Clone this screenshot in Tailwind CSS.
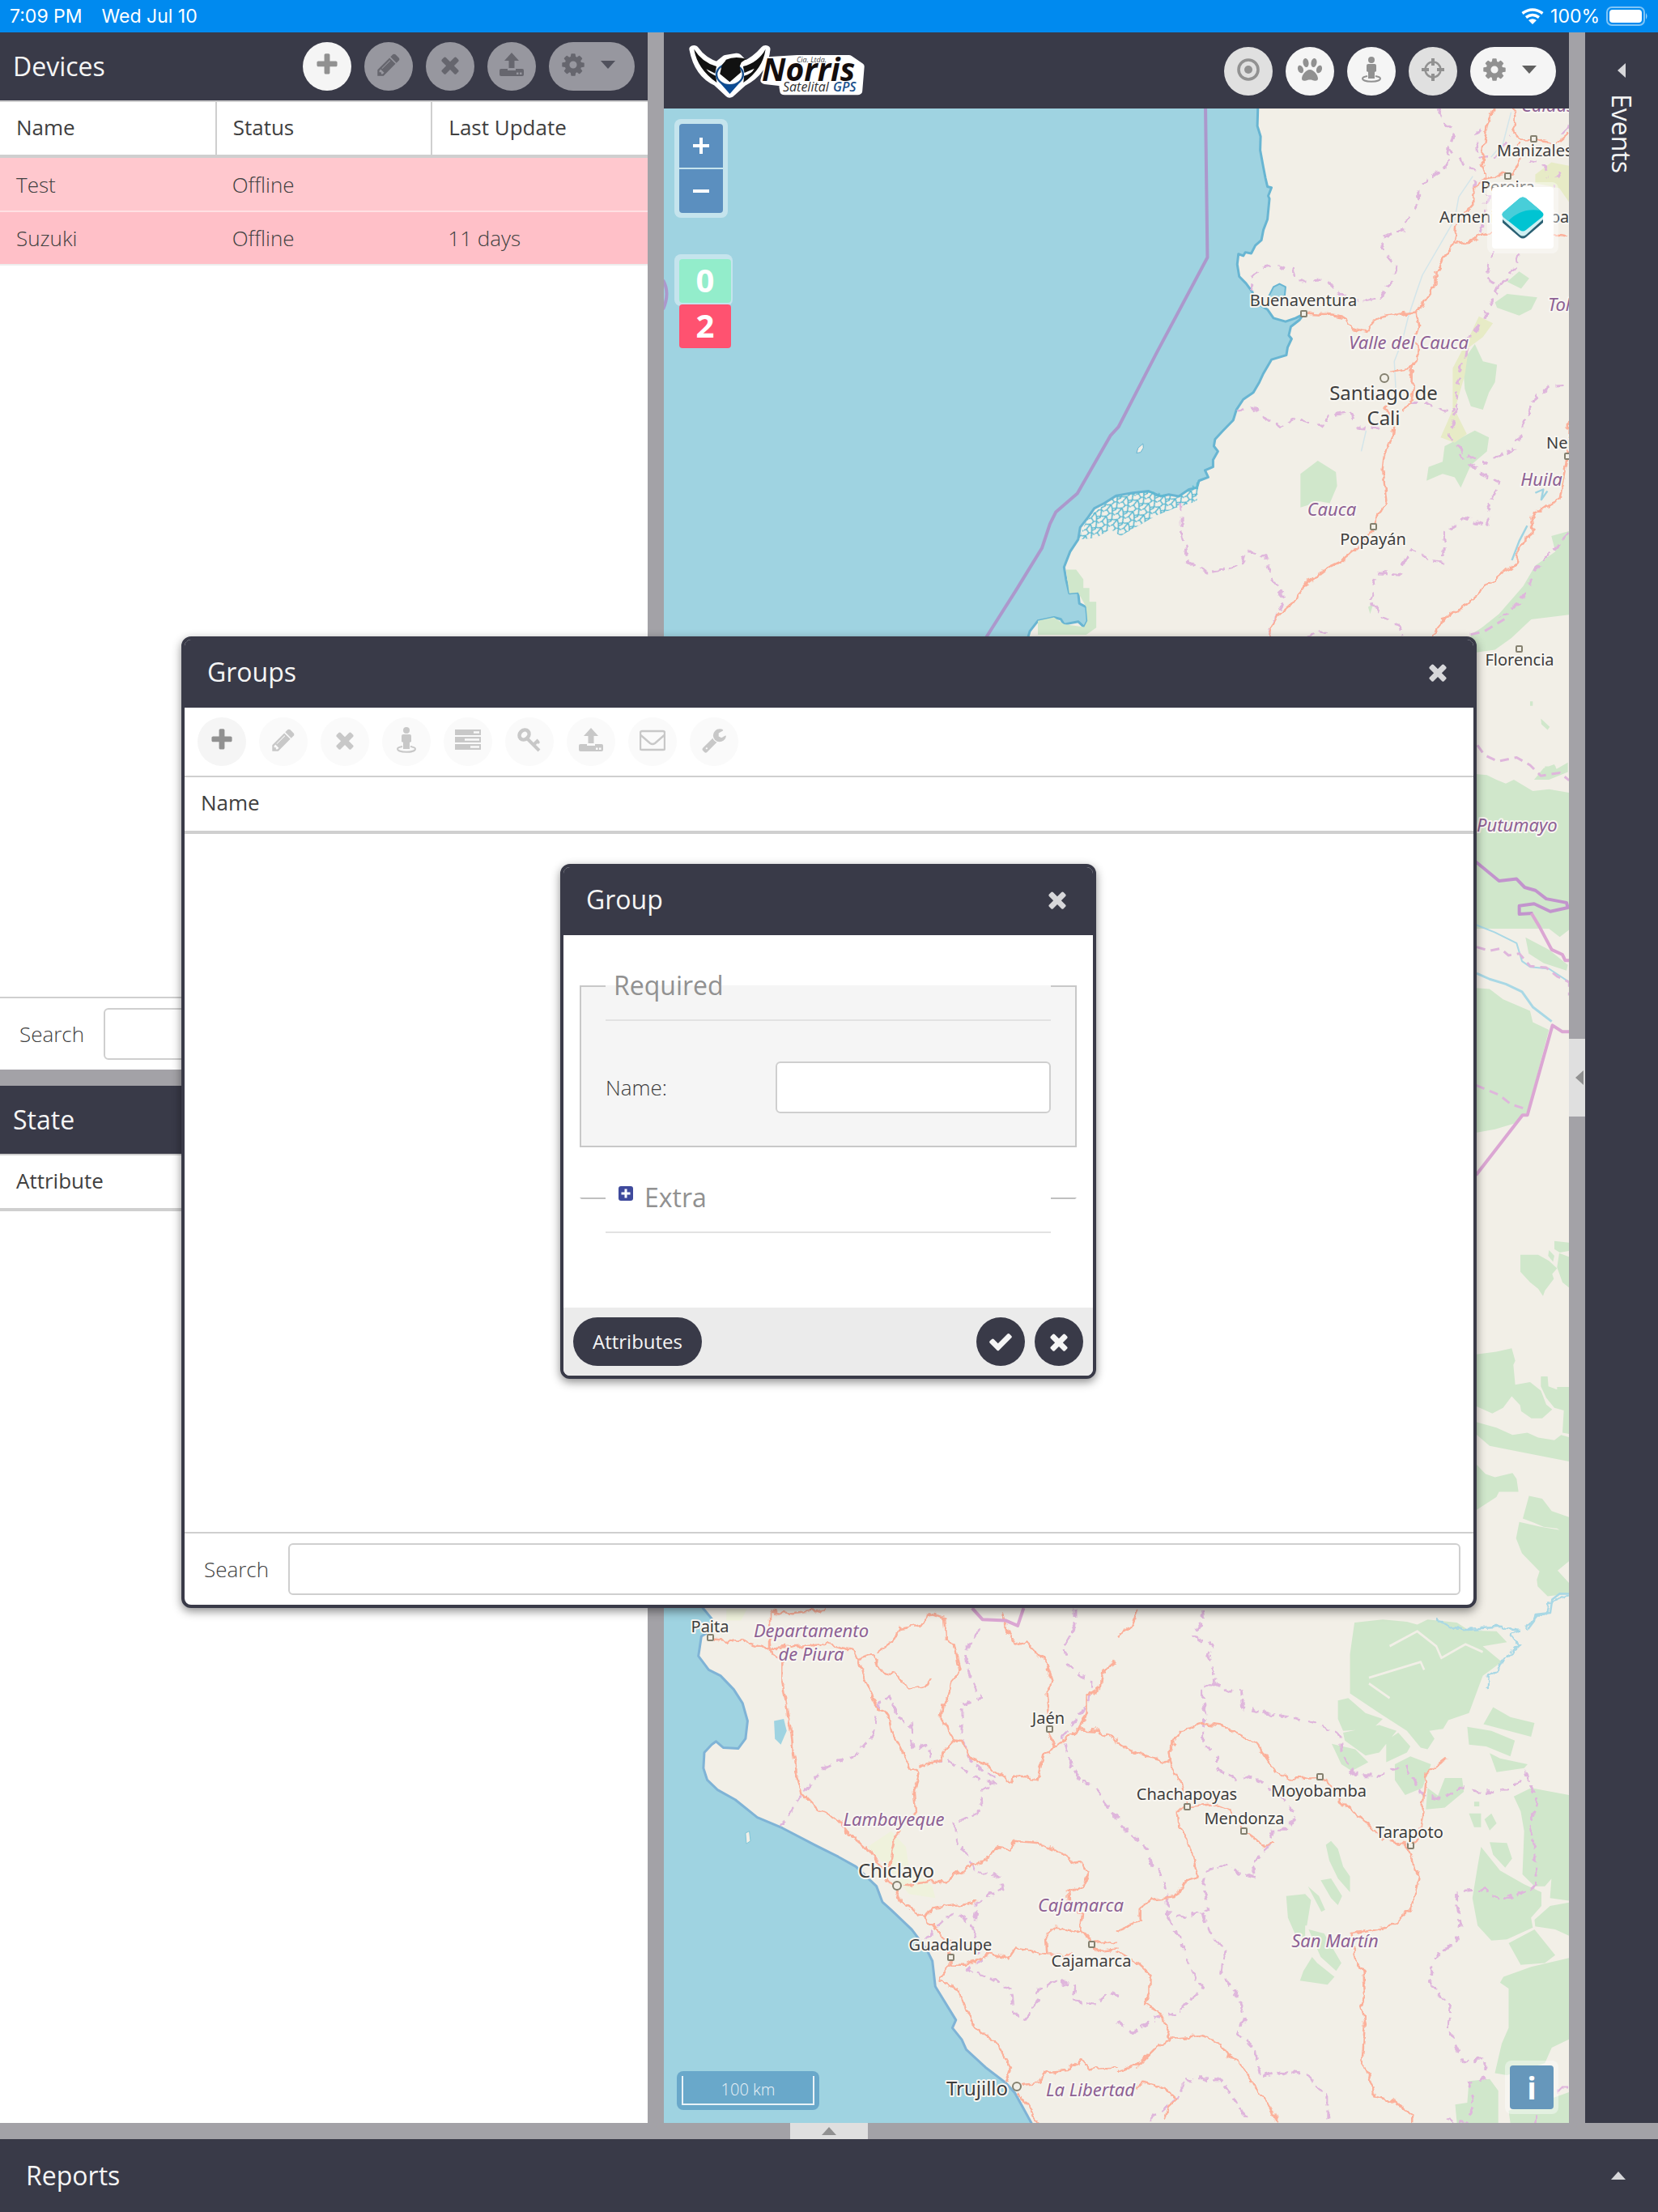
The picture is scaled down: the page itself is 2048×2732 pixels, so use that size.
<!DOCTYPE html>
<html lang="en">
<head>
<meta charset="utf-8">
<meta name="viewport" content="width=device-width, initial-scale=1">
<title>Norris Satelital GPS</title>
<script src="https://cdn.jsdelivr.net/npm/@tailwindcss/browser@4"></script>
</head>
<body class="bg-white font-['Open_Sans',sans-serif] text-[26px] leading-9 text-[#404040]">

<svg class="hidden" aria-hidden="true">
  <symbol id="plus" viewBox="0 0 1792 1792"><path d="M1600 736v192q0 40-28 68t-68 28h-416v416q0 40-28 68t-68 28h-192q-40 0-68-28t-28-68v-416h-416q-40 0-68-28t-28-68v-192q0-40 28-68t68-28h416v-416q0-40 28-68t68-28h192q40 0 68 28t28 68v416h416q40 0 68 28t28 68z"/></symbol>
  <symbol id="times" viewBox="0 0 1792 1792"><path d="M1490 1322q0 40-28 68l-136 136q-28 28-68 28t-68-28l-294-294-294 294q-28 28-68 28t-68-28l-136-136q-28-28-28-68t28-68l294-294-294-294q-28-28-28-68t28-68l136-136q28-28 68-28t68 28l294 294 294-294q28-28 68-28t68 28l136 136q28 28 28 68t-28 68l-294 294 294 294q28 28 28 68z"/></symbol>
  <symbol id="pencil" viewBox="0 0 1792 1792"><path d="M491 1536l91-91-235-235-91 91v107h128v128h107zm523-928q0-22-22-22-10 0-17 7l-542 542q-7 7-7 17 0 22 22 22 10 0 17-7l542-542q7-7 7-17zm-54-192l416 416-832 832h-416v-416zm683 96q0 53-37 90l-166 166-416-416 166-165q36-38 90-38 53 0 91 38l235 234q37 39 37 91z"/></symbol>
  <symbol id="cog" viewBox="0 0 1792 1792"><path d="M1152 896q0-106-75-181t-181-75-181 75-75 181 75 181 181 75 181-75 75-181zm512-109v222q0 12-8 23t-20 13l-185 28q-19 54-39 91 35 50 107 138 10 12 10 25t-9 23q-27 37-99 108t-94 71q-12 0-26-9l-138-108q-44 23-91 38-16 136-29 186-7 28-36 28h-222q-14 0-24.500-8.500t-11.500-21.500l-28-184q-49-16-90-37l-141 107q-10 9-25 9-14 0-25-11-126-114-165-168-7-10-7-23 0-12 8-23 15-21 51-66.500t54-70.500q-27-50-41-99l-183-27q-13-2-21-12.500t-8-23.500v-222q0-12 8-23t19-13l186-28q14-46 39-92-40-57-107-138-10-12-10-24 0-10 9-23 26-36 98.500-107.500t94.500-71.500q13 0 26 10l138 107q44-23 91-38 16-136 29-186 7-28 36-28h222q14 0 24.500 8.500t11.500 21.500l28 184q49 16 90 37l142-107q9-9 24-9 13 0 25 10 129 119 165 170 7 8 7 22 0 12-8 23-15 21-51 66.500t-54 70.500q26 50 41 98l183 28q13 2 21 12.500t8 23.500z"/></symbol>
  <symbol id="check" viewBox="0 0 1792 1792"><path d="M1671 566q0 40-28 68l-724 724-136 136q-28 28-68 28t-68-28l-136-136-362-362q-28-28-28-68t28-68l136-136q28-28 68-28t68 28l294 295 656-657q28-28 68-28t68 28l136 136q28 28 28 68z"/></symbol>
  <symbol id="wrench" viewBox="0 0 1792 1792"><path d="M448 1472q0-26-19-45t-45-19-45 19-19 45 19 45 45 19 45-19 19-45zm644-420l-682 682q-37 37-90 37-52 0-91-37l-106-108q-38-36-38-90 0-53 38-91l681-681q39 98 114.500 173.500t173.500 114.500zm634-435q0 39-23 106-47 134-164.500 217.500t-258.500 83.500q-185 0-316.500-131.500t-131.500-316.500 131.500-316.500 316.500-131.500q58 0 121.500 16.500t107.500 46.500q16 11 16 28t-16 28l-293 169v224l193 107q5-3 79-48.500t135.500-81 70.500-35.500q15 0 23.500 10t8.500 25z"/></symbol>
  <symbol id="upload" viewBox="0 0 32 32"><path d="M16 1l9 10h-5.500v9h-7v-9H7z"/><path fill-rule="evenodd" d="M3 21h8v2h10v-2h8q2 0 2 2v5q0 2-2 2H3q-2 0-2-2v-5q0-2 2-2zM22 25.500h2.500V28H22zM26 25.500h2.500V28H26z"/></symbol>
  <symbol id="person" viewBox="0 0 32 32"><circle cx="16" cy="4" r="4"/><path d="M12 9h8q2 0 2 2v7l-2 1v8h-8v-8l-2-1v-7q0-2 2-2z"/><path fill="none" stroke="currentColor" stroke-width="2" d="M11 24q-6 1-6 3c0 5 22 5 22 0q0-2-6-3"/></symbol>
  <symbol id="server" viewBox="0 0 32 32"><path fill-rule="evenodd" d="M0 3h32v7H0zM0 12h32v7H0zM0 21h32v7H0zM23 5.200h7v2.600h-7zM12 14.200h18v2.600H12zM19 23.200h11v2.600H19z"/></symbol>
  <symbol id="key" viewBox="0 0 32 32"><g fill="none" stroke="currentColor"><ellipse cx="9.500" cy="9.500" rx="6.500" ry="5.500" stroke-width="4.500" transform="rotate(-45 9.500 9.500)"/><path stroke-width="4" d="M13 14l15 15M21 22l6-6"/><path stroke-width="3" d="M25 17l3 3"/></g></symbol>
  <symbol id="mail" viewBox="0 0 32 32"><path fill="none" stroke="currentColor" stroke-width="2.400" d="M3 5h26q2 0 2 2v20q0 1-2 1H3q-2 0-2-1V7q0-2 2-2zM1.500 10L13 20q3 2 6 0L30.500 10"/></symbol>
  <symbol id="target" viewBox="0 0 32 32"><circle cx="16" cy="16" r="12" fill="none" stroke="currentColor" stroke-width="3.600"/><circle cx="16" cy="16" r="5"/></symbol>
  <symbol id="paw" viewBox="0 0 32 32"><ellipse cx="11" cy="7.500" rx="3.500" ry="5.500" transform="rotate(-10 11 7.500)"/><ellipse cx="21" cy="7.500" rx="3.500" ry="5.500" transform="rotate(10 21 7.500)"/><ellipse cx="4.500" cy="15.500" rx="3.300" ry="5" transform="rotate(-20 4.500 15.500)"/><ellipse cx="27.500" cy="15.500" rx="3.300" ry="5" transform="rotate(20 27.500 15.500)"/><path d="M16 16c5 0 10 7 10 11 0 3-3 3-5 2.500s-3-1-5-1-3 .5-5 1-5 .5-5-2.500c0-4 5-11 10-11z"/></symbol>
  <symbol id="cross" viewBox="0 0 32 32"><circle cx="16" cy="16" r="9.500" fill="none" stroke="currentColor" stroke-width="2.500"/><path d="M14 2h4v9h-4zM14 21h4v9h-4zM2 14h9v4H2zM21 14h9v4h-9z"/></symbol>
</svg>

<div class="flex min-h-screen flex-col">
  <div class="flex h-10 items-center gap-6 bg-[#008aef] px-3 font-['Inter',sans-serif] text-[23px] text-white">
    <span>7:09 PM</span>
    <span class="flex-1">Wed Jul 10</span>
    <div class="flex items-center gap-2">
      <svg class="h-5 w-7" viewBox="0 0 28 20"><g fill="none" stroke="#fff" stroke-width="3.500"><path d="M1.500 6.500q12.500-9 25 0"/><path d="M6 11.500q8-6 16 0"/></g><path fill="#fff" d="M9 15q5-3.500 10 0l-5 5z"/></svg>
      <span>100%</span>
      <svg class="h-6 w-[52px]" viewBox="0 0 52 24"><rect x="1" y="1" width="46" height="22" rx="6" fill="none" stroke="#fff" stroke-opacity=".5" stroke-width="2"/><rect x="4" y="4" width="40" height="16" rx="4" fill="#fff"/><path fill="#fff" fill-opacity=".6" d="M49 8q3 4 0 8z"/></svg>
    </div>
  </div>

  <div class="relative flex flex-1 flex-col">
    <div class="flex flex-1">
      <div class="flex w-[800px] shrink-0 flex-col">
        <section class="flex flex-1 basis-0 flex-col">
          <header class="flex h-[84px] items-center gap-4 bg-[#393a48] px-4 text-[#f5f5f5]">
            <h2 class="flex-1 text-[32px]">Devices</h2>
            <button type="button" aria-label="Add" class="flex size-[60px] items-center justify-center rounded-full bg-[#f5f5f5] pb-1 text-[#919191]"><svg class="size-8 fill-current"><use href="#plus"/></svg></button>
            <button type="button" aria-label="Edit" class="flex size-[60px] items-center justify-center rounded-full bg-[#97979f] pb-1 text-[#66666e]"><svg class="size-8 fill-current"><use href="#pencil"/></svg></button>
            <button type="button" aria-label="Remove" class="flex size-[60px] items-center justify-center rounded-full bg-[#97979f] pb-1 text-[#66666e]"><svg class="size-8 fill-current"><use href="#times"/></svg></button>
            <button type="button" aria-label="Command" class="flex size-[60px] items-center justify-center rounded-full bg-[#97979f] pb-1 text-[#66666e]"><svg class="size-8 fill-current"><use href="#upload"/></svg></button>
            <button type="button" aria-label="Settings" class="flex h-[60px] w-[106px] items-center justify-between rounded-full bg-[#97979f] pr-6 pb-1 pl-3.5 text-[#66666e]"><svg class="size-8 fill-current"><use href="#cog"/></svg><svg class="h-2.5 w-[18px] fill-[#50515c]" viewBox="0 0 18 10"><path d="M0 0h18l-9 10z"/></svg></button>
          </header>
          <table class="w-full table-fixed border-t-2 border-[#cfcfcf] text-left">
            <thead>
              <tr class="h-[68px] border-b-4 border-[#cfcfcf]">
                <th scope="col" class="border-r-2 border-[#cfcfcf] px-5 pb-1 font-normal">Name</th>
                <th scope="col" class="border-r-2 border-[#cfcfcf] px-5 pb-1 font-normal">Status</th>
                <th scope="col" class="px-5 pb-1 font-normal">Last Update</th>
              </tr>
            </thead>
            <tbody class="font-light">
              <tr class="h-[68px] border-b-2 border-[#ffe0e3] bg-[#ffc8ce]"><td class="px-5">Test</td><td class="px-5">Offline</td><td></td></tr>
              <tr class="h-[66px] border-b-2 border-[#ededed] bg-[#ffc0c8]"><td class="px-5">Suzuki</td><td class="px-5">Offline</td><td class="px-5">11 days</td></tr>
            </tbody>
          </table>
          <div class="mt-auto flex h-[90px] items-center gap-6 border-t-2 border-[#cfcfcf] px-6">
            <label for="device-search" class="font-light">Search</label>
            <input id="device-search" type="text" class="h-16 min-w-0 flex-1 rounded-md border-2 border-[#cfcfcf] px-3">
          </div>
        </section>
        <div class="h-5 bg-[#a3a2a7]"></div>
        <section class="flex-1 basis-0">
          <header class="flex h-[84px] items-center bg-[#393a48] px-4 text-[#f5f5f5]"><h2 class="text-[32px]">State</h2></header>
          <table class="w-full table-fixed border-t-2 border-[#cfcfcf] text-left">
            <thead><tr class="h-[68px] border-b-4 border-[#cfcfcf]"><th scope="col" class="px-5 pb-1 font-normal">Attribute</th><th scope="col" class="px-5 pb-1 font-normal">Value</th></tr></thead>
          </table>
        </section>
      </div>

      <div class="w-5 shrink-0 bg-[#a3a2a7]"></div>

      <main class="flex min-w-0 flex-1 flex-col">
        <header class="flex h-[94px] items-center gap-4 bg-[#393a48] pt-0.5 pr-4 pl-7">
          <svg class="h-[72px] w-[224px]" viewBox="848 50 224 72" role="img" aria-label="Norris Satelital GPS">
            <g transform="translate(800 0) scale(.4209 .3333)">
              <g stroke="#fff" stroke-width="28" stroke-linejoin="round" fill="#fff">
                <path d="M136 176Q150 270 205 300L241 342L278 300Q340 260 346 176Q320 215 285 235L262 205L230 212L205 238Q160 220 136 176Z"/>
                <path d="M345 292L362 218L440 212H590L622 240L616 332H402L398 300Z"/>
              </g>
              <path fill="#111" d="M136 176Q146 250 203 300L200 275Q180 265 172 250L198 266L202 240Q160 225 136 176ZM346 176Q338 250 281 300L283 275Q305 268 313 248L284 264L280 240Q325 225 346 176Z"/>
              <circle cx="241" cy="270" r="39" fill="#fff" stroke="#174f8d" stroke-width="6"/>
              <path fill="#111" d="M230 215Q255 200 290 212L275 225L270 240L274 262L241 298L212 268L218 235Q225 225 228 220Z"/>
              <path fill="#0b4b93" d="M208 295L241 342L274 295Q241 325 208 295Z"/>
            </g>
            <text x="941" y="98" font-size="39" font-weight="700" font-style="italic" fill="#140d0d">Norris</text>
            <text x="984" y="75" font-size="9" font-style="italic" fill="#444">Cia. Ltda.</text>
            <text x="967" y="111" font-size="16" font-style="italic" fill="#333">Satelital</text>
            <text x="1029" y="111" font-size="16" font-weight="600" font-style="italic" fill="#174f8d">GPS</text>
          </svg>
          <div class="flex-1"></div>
          <button type="button" aria-label="Geofences" class="flex size-[60px] items-center justify-center rounded-full bg-[#e0e0e0] pb-1 text-[#919191]"><svg class="size-8 fill-current"><use href="#target"/></svg></button>
          <button type="button" aria-label="Live routes" class="flex size-[60px] items-center justify-center rounded-full bg-[#f5f5f5] pb-1 text-[#919191]"><svg class="size-8 fill-current"><use href="#paw"/></svg></button>
          <button type="button" aria-label="Device follow" class="flex size-[60px] items-center justify-center rounded-full bg-[#f5f5f5] pb-1 text-[#919191]"><svg class="size-8 fill-current"><use href="#person"/></svg></button>
          <button type="button" aria-label="Select on map" class="flex size-[60px] items-center justify-center rounded-full bg-[#e0e0e0] pb-1 text-[#919191]"><svg class="size-8 fill-current"><use href="#cross"/></svg></button>
          <button type="button" aria-label="Account" class="flex h-[60px] w-[106px] items-center justify-between rounded-full bg-[#f5f5f5] pr-6 pb-1 pl-3.5 text-[#919191]"><svg class="size-8 fill-current"><use href="#cog"/></svg><svg class="h-2.5 w-[18px] fill-[#606060]" viewBox="0 0 18 10"><path d="M0 0h18l-9 10z"/></svg></button>
        </header>

        <div class="relative flex-1 overflow-hidden bg-[#9fd3e1]">
          <svg class="absolute inset-0 size-full" viewBox="820 134 1118 2488" preserveAspectRatio="xMinYMin slice" fill="none" stroke-linejoin="round">
            <defs>
              <pattern id="delta" width="36" height="44" patternUnits="userSpaceOnUse" patternTransform="rotate(20) scale(.8)"><path d="M0 8L12 2L20 14L36 6M12 2L6 24L0 30M20 14L26 30L36 34M6 24L18 34L26 30M18 34L14 44M30 0L32 14L24 22M26 30L30 44" fill="none" stroke="#5cb9d1" stroke-width="4"/></pattern>
              <filter id="wiggle"><feTurbulence type="fractalNoise" baseFrequency=".035" numOctaves="3" seed="4" result="n"/><feDisplacementMap in="SourceGraphic" in2="n" scale="22" xChannelSelector="R" yChannelSelector="G"/></filter>
            </defs>
            <path stroke="#ac98cc" stroke-width="4" d="M819 346q9 16 0 36"/>
            <!-- coastlines -->
            <g transform="translate(1180 130) scale(.4975 .4274)">
              <path fill="#f2efe7" stroke="#68b5d2" stroke-width="3" vector-effect="non-scaling-stroke" d="M752 -20L750 60L758 90L757 130L765 180L770 210L775 235L785 238L777 262L780 270L775 330L765 360L760 390L745 405L735 428L720 425L715 435L703 430L700 460L705 495L722 515L738 540L740 565L775 590L790 615L820 625L845 615L865 603L855 620L833 640L828 665L835 675L825 700L822 722L785 735L765 775L755 800L740 830L715 850L698 880L690 910L665 940L645 965L642 985L652 1000L640 1025L640 1045L620 1055L628 1075L605 1085L600 1105L580 1110L555 1130L530 1125L510 1130L480 1115L440 1120L400 1128L370 1150L345 1165L330 1190L310 1220L305 1255L285 1290L270 1335L275 1370L283 1410L305 1408L308 1440L325 1450L328 1490L320 1508L305 1492L270 1500L262 1485L245 1480L205 1490L185 1520L175 1560L1560 1560V-20z"/>
              <path fill="#9fd3e1" stroke="#68b5d2" stroke-width="2" vector-effect="non-scaling-stroke" d="M777 555L790 525L805 516L820 525L818 550L785 565z"/>
              <path fill="url(#delta)" d="M605 1085L600 1145L555 1160L500 1185L410 1245L385 1225L350 1250L305 1255L330 1190L400 1128L480 1115L555 1130z"/>
              <path fill="#f2efe7" stroke="#68b5d2" stroke-width="1" vector-effect="non-scaling-stroke" d="M466 978L454 990L450 1005L460 1003L467 990z"/>
            </g>
            <g transform="translate(810 1970) scale(.3635 .486)">
              <path fill="#f2efe7" stroke="#7fb3d6" stroke-width="3" vector-effect="non-scaling-stroke" d="M140 10L160 33L190 60L200 85L155 105L150 130L145 155L180 190L220 205L265 240L295 275L312 320L305 365L280 390L230 388L205 372L190 380L165 400L162 440L175 470L210 495L270 520L345 565L430 592L540 635L620 665L680 690L750 740L770 780L800 800L870 850L920 900L940 930L950 995L1020 1080L1008 1100L1040 1130L1055 1155L1120 1200L1190 1240L1220 1265L1290 1360H3200V10z"/>
              <path fill="#9fd3e1" d="M402 320L435 315L445 345L425 380L405 365z"/>
              <path fill="#f2efe7" stroke="#7cc5d8" stroke-width="1" vector-effect="non-scaling-stroke" d="M305 605L318 600L322 625L308 632z"/>
            </g>
            <path fill="#f2efe7" d="M1300 780H1940V1990H1300z"/>
            <!-- Valle del Cauca, Cauca, Huila -->
            <g transform="translate(1180 130) scale(.4975 .4274)">
              <g fill="#d0e7cb">
                <path d="M857 1065L900 1027L945 1060L948 1100L930 1150L905 1145L857 1162zM1370 510L1400 480L1425 500L1405 530zM1340 570L1370 545L1445 555L1430 590L1400 608L1345 585zM1290 690L1310 740L1345 750L1340 800L1325 830L1310 880L1280 870L1265 820L1260 740zM1215 985L1290 940L1325 960L1320 1000L1280 1040L1255 1105L1240 1075L1210 1065L1170 1085L1175 1045L1210 1030zM1540 1225L1480 1245L1490 1290L1440 1330L1410 1390L1350 1470L1280 1535L1370 1540L1400 1490L1540 1470zM275 1342H300L318 1370V1395H333V1435H350V1510L325 1530H205V1490L245 1480L270 1500L320 1508L328 1490L325 1450L305 1408L283 1410zM1025 1450L1038 1440L1030 1470z"/>
              </g>
              <path fill="#e7ebc6" d="M1440 200L1480 165L1524 175V280L1500 240L1440 225zM1300 610L1335 630L1310 670L1275 700L1265 780L1240 880L1270 950L1240 975L1205 960L1235 880L1235 760L1280 660z"/>
              <g stroke="#9fd3e1" stroke-width="5"><path d="M1420 1215L1400 1260L1382 1315M1440 1120L1460 1110L1455 1140L1470 1115"/></g>
              <g stroke="#d3e5ea" stroke-width="3"><path d="M1285 205L1250 265L1240 330L1200 410L1160 490L1145 540L1125 610L1110 680L1090 740L1095 850M1380 20L1360 110L1330 150M1020 940L1008 1000"/></g>
              <g filter="url(#wiggle)">
                <path stroke="#dfb6dc" stroke-width="3" stroke-dasharray="11 7" vector-effect="non-scaling-stroke" d="M1200 10L1215 50L1238 75L1225 130L1215 190L1180 205L1150 235L1148 290L1120 330L1115 360L1060 380L1062 420L1095 465L1090 500L1055 555L1010 567L960 550L920 505L850 508L835 475L800 465L760 470L735 500V540M1225 120L1250 160L1290 190V240M1305 70L1292 90L1300 150L1340 155L1380 90M1425 160L1455 165L1475 210M1524 60L1505 85M1500 190L1485 240M1320 260L1305 370M1335 420L1318 500L1350 520L1390 470L1405 415M1350 520L1330 570L1300 640L1270 680L1260 740L1245 800V880L1225 950L1260 1000L1315 1035L1390 990L1410 930L1430 860L1480 810L1524 808M698 880L735 875L770 905L810 930L850 905L915 930L930 895L980 885L1000 930L1060 935M1130 860L1170 860L1215 885L1240 880M1250 1005L1300 1060L1350 1090L1320 1170L1325 1215L1260 1195L1215 1240L1210 1320L1180 1315L1130 1285L1100 1355L1050 1350L1030 1430L1060 1480L1100 1500L1110 1535M560 1150L562 1240L580 1320L625 1350L710 1330L720 1290L770 1300L785 1370L820 1425L790 1490L780 1535M870 1535L920 1523M1524 1235L1480 1290L1440 1350L1400 1440L1340 1500L1280 1535"/>
                <path stroke="#fcb09a" stroke-width="2.500" vector-effect="non-scaling-stroke" d="M1340 10L1320 60L1312 120L1310 170L1320 210L1300 220L1285 260V290L1265 315L1245 350L1240 400L1215 440L1195 480V520L1170 560L1145 598L1150 640L1140 680L1152 720L1135 760V820L1130 860L1110 885M1385 10L1390 50L1380 70L1400 100L1435 98L1490 112L1524 80M1310 210L1345 205L1385 195L1398 165L1395 110M1240 403L1275 395L1310 375L1350 365M1480 375L1524 380M1145 598L1100 603L1050 615L1020 655L985 645L965 610L935 605L870 600M1082 768L1135 760M1075 860L1070 880L1090 910L1085 960L1065 1010L1060 1060L1068 1140L1055 1180L1037 1215M1037 1225L1000 1280L960 1318L920 1340L875 1380L835 1440L795 1480L780 1535M1524 910L1520 1010L1500 1140L1465 1160L1430 1190L1435 1235L1400 1270L1395 1320L1340 1375L1310 1385L1280 1440L1220 1475L1195 1510L1190 1535"/>
              </g>
              <path stroke="#ac98cc" stroke-width="4" vector-effect="non-scaling-stroke" d="M621 -10L626 440L500 715L405 930L385 955L303 1122L250 1175L235 1210L215 1280L150 1403L70 1550"/>
            </g>
            <!-- eastern strip, Putumayo -->
            <g transform="translate(1780 760) scale(.3333 .4719)">
              <path fill="#d0e7cb" d="M350 0L260 60L200 90L100 100L110 50L230 0zM120 415L170 418L205 430L240 440L270 430L340 460L400 455L480 465V820L440 842L400 820H120zM313 843L400 875L470 915L465 930L380 910L325 885zM120 975L180 978L230 1005L330 1035L340 1065L400 1085L320 1300L270 1330L200 1345L120 1355zM370 270L403 292L395 300L372 285zM330 225h10v12h-10zM345 430L380 400L420 390L428 402L470 385V410L400 430zM385 395h40v10h-40z"/>
              <g stroke="#a9d8e5" stroke-width="3"><path vector-effect="non-scaling-stroke" d="M132 937L180 952L240 965L300 985L340 1025L410 1063"/><path stroke-width="2" vector-effect="non-scaling-stroke" d="M130 810L200 830L280 858L300 905L330 920L400 925L475 960"/></g>
              <path stroke="#dfb6dc" stroke-width="3" stroke-dasharray="11 7" vector-effect="non-scaling-stroke" d="M110 50L160 42L235 10M135 340L160 365L210 382L280 372L330 392L370 420L440 412L475 432M132 868L180 878L220 872L250 890L290 885L330 918L390 922L430 945L475 960V995M130 1230L215 1255L260 1280L305 1290"/>
              <path stroke="#c294cd" stroke-width="4" vector-effect="non-scaling-stroke" d="M120 640L155 660L215 695L280 690L310 712L350 720L390 742L465 752L470 765L405 775L345 755L290 760V782L340 780"/>
              <path stroke="#dba6d3" stroke-width="4" vector-effect="non-scaling-stroke" d="M335 780L365 815L410 875L450 888L460 903H480M480 1090H450L413 1073L320 1308H302L130 1465"/>
            </g>
            <g transform="translate(1780 1400) scale(.3333 .4082)" fill="#d0e7cb">
              <path d="M294 367H360L400 385L430 408L412 425L418 440L385 475L378 492L360 470L330 450L294 418zM420 325L474 330V355L440 360L420 350zM400 353L420 370L415 388L397 370zM438 362L480 375V470L450 450L430 405zM130 668L205 660L262 650L275 688L268 700L275 760L330 752L370 778L390 820L412 835L375 862H335L297 840L293 822L262 795L230 830L190 847L130 825zM370 735L395 735L398 765L430 775V767H480V910L450 905L455 838L420 830L390 800L370 765zM130 873L205 890L265 912L320 905L360 920L420 928L445 912L480 920V993L290 963L180 945L130 910zM130 1000L165 1030L200 1040L265 1027L280 1045L287 1084H215L205 1100L130 1140zM326 1096L375 1105L410 1142L480 1162V1220L430 1195L380 1190L345 1178L303 1165zM290 1175L370 1190L440 1200L480 1220V1290L432 1322L480 1365V1392L395 1400L358 1370L355 1350L365 1325L300 1270L278 1225z"/>
              <path fill="none" stroke="#a9d8e5" stroke-width="2.500" vector-effect="non-scaling-stroke" d="M475 1393L440 1392L412 1410L405 1450L350 1455L345 1475L322 1500"/>
            </g>
            <!-- Piura, Lambayeque, Cajamarca -->
            <g transform="translate(810 1970) scale(.3635 .486)">
              <path fill="#eff2dc" d="M720 640L800 600L850 640L860 690L940 740L950 770L860 760L800 700zM240 35h70l-20 30h-50z"/>
              <g filter="url(#wiggle)">
                <path stroke="#dfb6dc" stroke-width="3" stroke-dasharray="11 7" vector-effect="non-scaling-stroke" d="M425 590L500 505L575 435L680 405L740 355L755 290L765 265L790 257L810 270L815 305L865 330L875 390L925 380L940 425L1000 420L1075 460L1150 480L1105 500L1110 545L1015 580L1025 640L1060 660L1080 700L1165 715L1180 745L1090 785L1080 850L1050 820L1010 808L960 840L910 880M1080 850L1105 930L1060 952L1140 975L1205 1000L1215 1060L1250 1078L1310 1022M1100 90L1050 145L1065 200L1105 265L1040 280L1040 360L1070 420L1150 465M1425 35V80L1385 130L1395 175L1480 220L1475 270L1385 360L1400 410L1445 475L1480 480L1570 570M1290 1010L1360 980L1425 995L1415 1030L1500 1038L1540 1010L1570 1020"/>
                <path stroke="#fcb09a" stroke-width="2.500" vector-effect="non-scaling-stroke" d="M390 40L465 50L575 38M388 40V130L395 155L430 165L430 220L460 350L475 450L500 505L550 545L620 570L660 610L735 655L765 690L790 720L815 745L830 780L915 820L950 850L1000 880L1000 940L958 980L1030 1005L1055 1055L1085 1100L1160 1140L1205 1200L1190 1240M190 112L300 118L395 137L580 125L670 140L685 165L755 290L790 300L800 345L865 440L895 450L880 500L885 545L815 610L795 690M685 165L735 155L775 195L820 205L855 240L920 232L935 215M895 440L925 428L970 422L975 400L1015 370L970 315L975 280L995 255L1005 220L1033 195L1015 125L985 115L980 60L940 50L895 75L830 85L805 120L750 145M1015 370H1040L1070 415L1120 430L1200 472L1230 460L1300 465L1320 405L1355 390L1435 342L1500 345L1570 370M1180 40L1195 90L1220 125L1260 120L1330 175L1350 220L1325 245L1335 340L1355 390M1435 342L1465 300V260L1510 235L1515 200L1560 170M840 740L930 728L985 732L1060 688L1110 680L1160 640L1205 645L1220 625L1300 630L1380 655L1470 700L1455 740L1400 755L1405 790L1450 810L1445 850L1480 885L1570 880M915 820L940 795L1090 778M1000 940H1060L1140 910L1200 925L1225 898L1330 912L1325 860L1360 845L1445 855M1330 912L1420 915M1245 1245L1300 1240L1330 1212L1395 1208L1450 1180L1480 1205L1570 1203M1225 1270L1255 1290L1300 1342M1480 890L1510 905L1570 900"/>
              </g>
              <path stroke="#dba6d3" stroke-width="4" vector-effect="non-scaling-stroke" d="M1075 33L1110 62L1190 65L1230 78L1250 33"/>
            </g>
            <!-- Amazonas, San Martin -->
            <g transform="translate(1380 1970) scale(.426 .486)">
              <path fill="#d0e7cb" d="M688 70L770 62L840 68L870 75L900 62L985 70L1020 90L1100 92L1130 120L1060 130L1115 170L1060 205L1020 300L960 318L945 340L905 345L920 365L900 392L880 388L840 345L760 300L675 250V150zM640 268L670 262L720 300L770 315L740 340L655 345L640 315zM655 350L760 330L810 345L760 400L720 408L660 370zM780 370L815 350L850 385L840 400L780 425zM622 378L690 392L728 425L680 447L650 430zM805 430L850 410L910 430L885 490L835 508L805 470zM900 490L930 510L950 465H1000L1005 500L950 540L895 545zM1090 285L1140 310L1210 325L1200 360L1062 328zM1015 335L1085 345L1153 370L1140 410L1070 385L1020 380zM1080 402L1110 415L1190 430L1180 440L1100 450zM1150 512L1200 490L1320 510V675L1280 700L1240 740H1210L1175 710L1180 600L1170 550zM1055 640L1110 700L1180 735L1230 755V790L1200 820L1205 845L1130 875L1085 878L1045 840L1030 770L1045 690zM1080 628L1130 630L1145 670L1125 693L1090 660zM1260 710L1320 670V778L1255 770zM1210 825L1255 790L1320 780V870L1270 850L1212 842zM1135 885L1210 850L1270 915L1240 935L1170 940zM1120 970L1200 945L1320 920V1125L1260 1150L1240 1190L1130 1220L1095 1215L1115 1140L1135 1100V1000L1110 985zM1020 1235L1080 1230L1105 1260V1342H985L980 1295L1015 1290zM1225 1290L1320 1260V1342H1140L1135 1310zM605 635L620 625L640 645L655 690L675 715V755L640 720L615 675zM590 725L620 720L652 765L640 788L620 770zM553 740L585 765L603 800L592 805zM490 765L545 760L562 775L550 840H545V870H520L495 820zM555 850L600 860L650 935L635 955L590 920zM565 920L580 935L630 970L610 990L530 980L540 955zM1035 525h15v12h-15zM1020 555h35v35h-20zM1065 570L1085 555L1100 580L1080 598z"/>
              <path stroke="#f2efe7" stroke-width="6" d="M730 210L880 170L890 190M730 225L790 262M790 130L870 92L925 130L940 160L1010 125L1060 145"/>
              <g filter="url(#wiggle)">
                <path stroke="#a9d8e5" stroke-width="2.500" vector-effect="non-scaling-stroke" d="M930 62L980 88L1045 85L1110 82L1165 88L1142 100L1165 130L1120 160L1105 190L1075 205L1072 235M1190 85L1220 50L1245 52L1250 20L1320 0"/>
                <path stroke="#dfb6dc" stroke-width="3" stroke-dasharray="11 7" vector-effect="non-scaling-stroke" d="M248 35L250 60L222 100L275 130L260 155L280 185V225L330 245L360 240L365 285L430 298L520 315L580 328L650 358V395L685 455L765 458L830 432L860 475L890 510L940 518L990 488L1060 500L1130 498L1185 455L1220 530L1195 580L1210 640L1215 740L1120 778L1060 750L985 755V790L997 840L985 880L940 905L910 945V985L965 1050L957 1100L1005 1185L1070 1180V1225L1020 1240L1035 1300L1010 1340L955 1335M280 225L248 235V270L258 300L248 340V385L290 405V440L345 470L380 458L415 470L480 520L520 560L500 595L455 595L435 645L390 680L405 718L350 705L310 685L260 700L250 750L265 800L240 810L150 820L145 770L130 710L100 680L90 650L0 575M150 820L195 900L230 980L250 1000L215 1025L180 1060L100 1080L50 1112L0 1085M245 810L270 860L312 905L302 960L350 1020L370 1080L350 1115L400 1160L415 1225L470 1212L550 1220L610 1275V1342M95 1335L190 1265V1230L300 1230L380 1335M1215 1340V1310L1265 1255H1310"/>
                <path stroke="#fcb09a" stroke-width="2.500" vector-effect="non-scaling-stroke" d="M60 35L40 80L0 105M0 375L80 412L155 425L150 390L185 345L250 325L300 330L400 375L455 445L505 468L586 465L645 500V525L720 575L765 620L830 630L850 650L860 690L878 720L855 795L820 820L800 840L680 860L685 910L715 960L718 1020L705 1045L718 1090L710 1190L750 1275L800 1285L855 1320V1342M155 425L190 490L200 530L175 550L180 590L205 620L235 720L195 730L165 768L100 775L65 800V830L0 855M205 535L280 530L325 545L366 598L430 640L455 630M850 635L875 620L885 560L890 500L895 455L925 435L955 415M0 905L50 930L95 965V1005L80 1040L125 1062L155 1125L240 1120L300 1140L320 1170L350 1185L400 1250L440 1290L465 1342M0 1210L60 1195L110 1150L155 1130M55 1255L75 1240L140 1255L172 1280L150 1300L140 1335"/>
              </g>
            </g>
            <g fill="#f2efe7" stroke="#84806f" stroke-width="2">
              <rect x="874" y="2019" width="7" height="7" rx="1"/><rect x="1293" y="2132" width="7" height="7" rx="1"/><circle cx="1108" cy="2329" r="5"/><rect x="1171" y="2414" width="7" height="7" rx="1"/><rect x="1345" y="2398" width="7" height="7" rx="1"/><circle cx="1256" cy="2577" r="5"/><rect x="1463" y="2228" width="7" height="7" rx="1"/><rect x="1533" y="2258" width="7" height="7" rx="1"/><rect x="1627" y="2191" width="7" height="7" rx="1"/><rect x="1739" y="2276" width="7" height="7" rx="1"/><rect x="1891" y="168" width="7" height="7" rx="1"/><rect x="1859" y="214" width="7" height="7" rx="1"/><rect x="1607" y="384" width="7" height="7" rx="1"/><circle cx="1710" cy="467" r="5"/><rect x="1693" y="647" width="7" height="7" rx="1"/><rect x="1933" y="560" width="7" height="7" rx="1"/><rect x="1873" y="798" width="7" height="7" rx="1"/>
            </g>
            <g class="font-['Noto_Sans',sans-serif]" stroke="#f8f6f1" stroke-width="4" paint-order="stroke" font-size="20" fill="#3d3d3d">
              <text x="1849" y="193">Manizales</text><text x="1829" y="238">Pereira</text><text x="1778" y="275">Armenia</text><text x="1908" y="275">Ibagué</text><text x="1910" y="554">Neiva</text>
              <g text-anchor="middle">
                <text x="1610" y="378">Buenaventura</text><text x="1696" y="673">Popayán</text><text x="1877" y="822">Florencia</text><text x="877" y="2016">Paita</text><text x="1295" y="2129">Jaén</text><text x="1174" y="2409">Guadalupe</text><text x="1348" y="2429">Cajamarca</text><text x="1466" y="2223">Chachapoyas</text><text x="1537" y="2253">Mendonza</text><text x="1629" y="2219">Moyobamba</text><text x="1741" y="2270">Tarapoto</text>
                <g font-size="24"><text x="1709" y="494">Santiago de</text><text x="1709" y="525">Cali</text><text x="1107" y="2319">Chiclayo</text><text x="1207" y="2588">Trujillo</text></g>
              </g>
              <g font-style="italic" fill="#8d6094" font-size="22">
                <text x="1879" y="138">Caldas</text><text x="1912" y="384">Tolima</text><text x="1824" y="1027">Putumayo</text>
                <g text-anchor="middle"><text x="1740" y="431">Valle del Cauca</text><text x="1645" y="637">Cauca</text><text x="1904" y="600">Huila</text><text x="1002" y="2022">Departamento</text><text x="1002" y="2051">de Piura</text><text x="1104" y="2255">Lambayeque</text><text x="1335" y="2361">Cajamarca</text><text x="1347" y="2589">La Libertad</text><text x="1649" y="2405">San Martín</text></g>
              </g>
            </g>
          </svg>

          <div class="absolute top-[13px] left-[13px] flex flex-col gap-0.5 rounded-lg bg-white/40 p-1.5 text-white">
            <button type="button" aria-label="Zoom in" class="flex h-[54px] w-[54px] items-center justify-center rounded-t bg-[#5b8fbf]"><svg class="size-5" viewBox="0 0 20 20"><path stroke="#fff" stroke-width="4" d="M0 10h20M10 0v20"/></svg></button>
            <button type="button" aria-label="Zoom out" class="flex h-[54px] w-[54px] items-center justify-center rounded-b bg-[#5b8fbf]"><svg class="size-5" viewBox="0 0 20 20"><path stroke="#fff" stroke-width="4" d="M0 10h20"/></svg></button>
          </div>
          <div class="absolute top-[180px] left-[13px] flex h-16 w-[72px] flex-col gap-0.5 rounded-lg bg-white/40 p-1.5 text-center text-[40px] leading-[52px] font-bold text-white">
            <div class="h-[54px] w-16 shrink-0 rounded bg-[#93edcb]">0</div>
            <div class="h-[54px] w-16 shrink-0 rounded bg-[#ff5270]">2</div>
          </div>
          <div class="absolute top-[91px] right-[13px] rounded-lg bg-white/40 p-1.5">
            <button type="button" aria-label="Layers" class="flex size-[76px] items-center justify-center rounded bg-white"><svg class="h-[52px] w-[52px]" viewBox="0 0 52 52"><path fill="#2a6073" d="M1 28L22 8h8l21 20v4L30 50q-4 3-8 0L1 32z"/><path fill="#cfeff2" d="M1 24h50v4L30 47q-4 3-8 0L1 28z"/><path fill="#00c4d2" d="M22 2q4-3 8 0l20 17q3 3 0 6L30 41q-4 3-8 0L2 25q-3-3 0-6z"/><path fill="#48ced9" d="M22 2q4-3 8 0l18 15q-24-4-40 13L2 25q-3-3 0-6z"/></svg></button>
          </div>
          <div class="absolute bottom-4 left-4 rounded-lg bg-[#69a8ca] p-1.5"><div class="flex h-9 w-[164px] items-center justify-center border-2 border-t-0 border-[#e9f2f7] text-xl font-light text-[#e9f2f7]">100 km</div></div>
          <div class="absolute right-[13px] bottom-[11px] rounded-lg bg-white/40 p-1.5"><button type="button" aria-label="Attributions" class="flex size-[54px] items-center justify-center rounded bg-[#6697bb] text-[38px] font-bold text-white">i</button></div>
        </div>
      </main>

      <div class="flex w-5 shrink-0 flex-col justify-center bg-[#a3a2a7]"><button type="button" aria-label="Collapse events" class="flex h-24 w-5 items-center justify-end bg-[#dfdfdf] pr-0.5"><svg class="h-[18px] w-2.5 fill-[#919191]" viewBox="0 0 10 18"><path d="M10 0v18L0 9z"/></svg></button></div>
      <aside class="flex w-[90px] shrink-0 flex-col items-center gap-5 bg-[#393a48] pt-[38px] text-[#f5f5f5]">
        <button type="button" aria-label="Expand events"><svg class="h-[18px] w-2.5 fill-[#d7d7da]" viewBox="0 0 10 18"><path d="M10 0v18L0 9z"/></svg></button>
        <h2 class="text-[32px] [writing-mode:vertical-rl]">Events</h2>
      </aside>
    </div>

    <div class="flex h-5 justify-center bg-[#a3a2a7]"><button type="button" aria-label="Collapse reports" class="flex w-24 items-center justify-center bg-[#dfdfdf]"><svg class="h-2.5 w-[18px] fill-[#919191]" viewBox="0 0 18 10"><path d="M9 0l9 10H0z"/></svg></button></div>
    <footer class="flex h-[90px] items-center justify-between bg-[#393a48] pr-10 pl-8 text-[#f5f5f5]">
      <h2 class="text-[32px]">Reports</h2>
      <button type="button" aria-label="Expand reports"><svg class="h-2.5 w-[18px] fill-[#d7d7da]" viewBox="0 0 18 10"><path d="M9 0l9 10H0z"/></svg></button>
    </footer>

    <!-- Groups window -->
    <div class="absolute inset-0 flex items-center justify-center">
      <section role="dialog" aria-label="Groups" class="flex h-[1200px] w-[1600px] flex-col overflow-hidden rounded-xl border-4 border-[#393a48] bg-white shadow-[0_4px_12px_rgba(0,0,0,0.45)]">
        <header class="flex h-[84px] shrink-0 items-center justify-between bg-[#393a48] px-7 pb-1 text-[#f5f5f5]">
          <h2 class="text-[32px]">Groups</h2>
          <button type="button" aria-label="Close groups"><svg class="size-8 fill-[#d7d7da]"><use href="#times"/></svg></button>
        </header>
        <div class="flex h-[86px] shrink-0 items-center gap-4 border-b-2 border-[#cfcfcf] px-4 text-[#c8c8c8]">
          <button type="button" aria-label="Add group" class="flex size-[60px] items-center justify-center rounded-full bg-[#f5f5f5] pb-1 text-[#919191]"><svg class="size-8 fill-current"><use href="#plus"/></svg></button>
          <button type="button" aria-label="Edit group" class="flex size-[60px] items-center justify-center rounded-full bg-[#fafafa] pb-1"><svg class="size-8 fill-current"><use href="#pencil"/></svg></button>
          <button type="button" aria-label="Remove group" class="flex size-[60px] items-center justify-center rounded-full bg-[#fafafa] pb-1"><svg class="size-8 fill-current"><use href="#times"/></svg></button>
          <button type="button" aria-label="Geofences" class="flex size-[60px] items-center justify-center rounded-full bg-[#fafafa] pb-1"><svg class="size-8 fill-current"><use href="#person"/></svg></button>
          <button type="button" aria-label="Computed attributes" class="flex size-[60px] items-center justify-center rounded-full bg-[#fafafa] pb-1"><svg class="size-8 fill-current"><use href="#server"/></svg></button>
          <button type="button" aria-label="Drivers" class="flex size-[60px] items-center justify-center rounded-full bg-[#fafafa] pb-1"><svg class="size-8 fill-current"><use href="#key"/></svg></button>
          <button type="button" aria-label="Saved commands" class="flex size-[60px] items-center justify-center rounded-full bg-[#fafafa] pb-1"><svg class="size-8 fill-current"><use href="#upload"/></svg></button>
          <button type="button" aria-label="Notifications" class="flex size-[60px] items-center justify-center rounded-full bg-[#fafafa] pb-1"><svg class="size-8 fill-current"><use href="#mail"/></svg></button>
          <button type="button" aria-label="Maintenance" class="flex size-[60px] items-center justify-center rounded-full bg-[#fafafa] pb-1"><svg class="size-8 fill-current"><use href="#wrench"/></svg></button>
        </div>
        <table class="w-full text-left"><thead><tr class="h-[68px] border-b-4 border-[#cfcfcf]"><th scope="col" class="px-5 pb-1 font-normal">Name</th></tr></thead></table>
        <div class="mt-auto flex h-[90px] shrink-0 items-center gap-6 border-t-2 border-[#cfcfcf] pr-4 pl-6">
          <label for="group-search" class="font-light">Search</label>
          <input id="group-search" type="text" class="h-16 min-w-0 flex-1 rounded-md border-2 border-[#cfcfcf] px-3">
        </div>
      </section>
    </div>

    <!-- Group form -->
    <div class="absolute inset-0 flex items-center justify-center pr-0.5 pb-0.5">
      <form aria-label="Group" class="w-[662px] overflow-hidden rounded-xl border-4 border-[#393a48] bg-white shadow-[0_4px_12px_rgba(0,0,0,0.45)]">
        <header class="flex h-[84px] items-center justify-between bg-[#393a48] px-7 pb-1 text-[#f5f5f5]">
          <h2 class="text-[32px]">Group</h2>
          <button type="button" aria-label="Close group"><svg class="size-8 fill-[#d7d7da]"><use href="#times"/></svg></button>
        </header>
        <div class="flex flex-col gap-5 px-5 pt-5 pb-[90px]">
          <fieldset class="min-w-0 border-2 border-[#c8c8c8] bg-[#f5f5f5] px-[30px] pb-10">
            <legend class="w-full border-b-2 border-[#e2e2e2] px-2.5 py-6 text-[32px] text-[#919191]">Required</legend>
            <div class="flex items-center pt-[50px]">
              <label for="group-name" class="w-[210px] shrink-0 font-light">Name:</label>
              <input id="group-name" type="text" class="h-16 w-full min-w-0 flex-1 rounded-md border-2 border-[#cfcfcf] bg-white px-3">
            </div>
          </fieldset>
          <fieldset class="min-w-0 border-2 border-transparent border-t-[#c0c0c0] px-[30px]">
            <legend class="w-full border-b-2 border-[#e2e2e2] px-4 py-6 text-[#919191]">
              <span class="flex gap-3.5"><button type="button" aria-label="Expand extra" class="flex h-[26px] items-center"><svg class="size-[18px]" viewBox="0 0 18 18"><rect width="18" height="18" rx="3" fill="#3f4a9c"/><path stroke="#fff" stroke-width="3" d="M3.500 9h11M9 3.500v11"/></svg></button><span class="text-[32px]">Extra</span></span>
            </legend>
          </fieldset>
        </div>
        <footer class="flex h-[84px] items-center gap-3 bg-[#ebebeb] px-3">
          <button type="button" class="h-[60px] rounded-full bg-[#393a48] px-6 text-2xl text-[#f5f5f5]">Attributes</button>
          <div class="flex-1"></div>
          <button type="submit" aria-label="Save" class="flex size-[60px] items-center justify-center rounded-full bg-[#393a48] text-[#f5f5f5]"><svg class="size-8 fill-current"><use href="#check"/></svg></button>
          <button type="button" aria-label="Cancel" class="flex size-[60px] items-center justify-center rounded-full bg-[#393a48] text-[#f5f5f5]"><svg class="size-8 fill-current"><use href="#times"/></svg></button>
        </footer>
      </form>
    </div>
  </div>
</div>
</body>
</html>
